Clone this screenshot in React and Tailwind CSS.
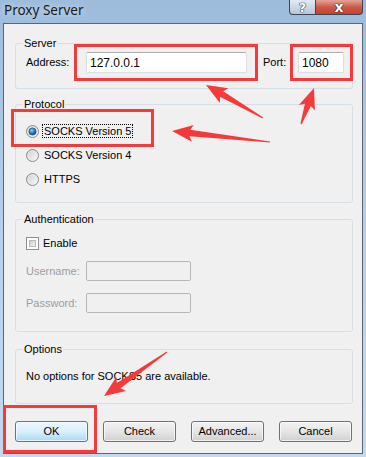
import React from "react";

const arrows = [
  { from: [263, 118], to: [206, 85] },
  { from: [301, 124], to: [314, 88] },
  { from: [270, 142], to: [172, 131] },
  { from: [167, 352], to: [104, 396] },
];

// thin tail that widens into a barbed head, like a markup tool arrow
const arrowPoints = ([x1, y1], [x2, y2]) => {
  const dx = x2 - x1;
  const dy = y2 - y1;
  const len = Math.hypot(dx, dy);
  const ux = dx / len;
  const uy = dy / len;
  const nx = -uy;
  const ny = ux;
  const headLen = 18;
  const headW = 8.5;
  const bodyW = 3.2;
  const tailW = 0.6;
  const bx = x2 - ux * headLen;
  const by = y2 - uy * headLen;
  const pts = [
    [x1 + nx * tailW, y1 + ny * tailW],
    [bx + nx * bodyW, by + ny * bodyW],
    [bx - ux * 3 + nx * headW, by - uy * 3 + ny * headW],
    [x2, y2],
    [bx - ux * 3 - nx * headW, by - uy * 3 - ny * headW],
    [bx - nx * bodyW, by - ny * bodyW],
    [x1 - nx * tailW, y1 - ny * tailW],
  ];
  return pts.map((p) => p.map((v) => v.toFixed(1)).join(",")).join(" ");
};

const Radio = ({ checked }) => (
  <svg width="13" height="13" viewBox="0 0 13 13" className="shrink-0">
    <defs>
      <linearGradient id={checked ? "rbg1" : "rbg0"} x1="0" y1="0" x2="1" y2="1">
        <stop offset="0" stopColor="#cfcfcf" />
        <stop offset="1" stopColor="#fbfbfb" />
      </linearGradient>
      <radialGradient id="rdot" cx="0.4" cy="0.35" r="0.7">
        <stop offset="0" stopColor="#8fd4f7" />
        <stop offset="0.5" stopColor="#2a87c4" />
        <stop offset="1" stopColor="#0d3f6b" />
      </radialGradient>
    </defs>
    <circle cx="6.5" cy="6.5" r="6" fill={`url(#${checked ? "rbg1" : "rbg0"})`} stroke="#8a8a8a" />
    <circle cx="6.5" cy="6.5" r="4.6" fill="none" stroke="#e8e8e8" strokeWidth="0.8" />
    {checked && <circle cx="6.5" cy="6.5" r="3.6" fill="url(#rdot)" stroke="#1b4f7d" strokeWidth="0.7" />}
  </svg>
);

const Group = ({ label, className, children }) => (
  <div className={`relative w-[338px] border border-[#d5dfe5] rounded-[3px] ${className}`}>
    <span className="absolute left-[7px] -top-[8px] px-[1px] bg-[#f0f0f0] leading-[14px]">{label}</span>
    {children}
  </div>
);

const Button = ({ children, primary }) => (
  <div
    className={`w-[73px] h-[21px] rounded-[3px] border flex items-center justify-center shadow-[inset_0_0_0_1px_rgba(255,255,255,0.7)] ${
      primary
        ? "border-[#3c7fb1] bg-gradient-to-b from-[#eaf6fd] via-[#d9f0fc] to-[#a7d9f5]"
        : "border-[#707070] bg-gradient-to-b from-[#f2f2f2] via-[#e6e6e6] to-[#d0d0d0]"
    }`}
  >
    {children}
  </div>
);

const TextBox = ({ value, className }) => (
  <div
    className={`h-[21px] bg-white border border-[#dbdfe6] border-t-[#abadb3] rounded-[2px] flex items-center pl-[3px] text-[12px] ${className}`}
  >
    {value}
  </div>
);

const DisabledBox = () => (
  <div className="w-[105px] h-[20px] border border-[#b3b7ba] rounded-[2px] bg-[#f0f0f0]" />
);

export default function App() {
  return (
    <div className="relative w-[366px] h-[457px] overflow-hidden bg-gradient-to-b from-[#9dbcdb] via-[#b6d0eb] to-[#c3d9f0] font-['Liberation_Sans',Arial,sans-serif] text-[11px] text-black">
      {/* title bar */}
      <div className="h-[23px] flex items-start">
        <span className="ml-[4px] mt-[1px] font-['Noto_Sans',sans-serif] text-[13.5px] leading-[18px] text-[#1a1a1a] [text-shadow:0_0_6px_rgba(255,255,255,0.7)]">
          Proxy Server
        </span>
        <div className="ml-auto mr-[3px] flex">
          <div className="w-[27px] h-[15px] border border-t-0 border-[#3b4656] rounded-bl-[4px] bg-gradient-to-b from-[#e3eaf3] to-[#b7c6d8] flex items-center justify-center text-white font-bold text-[13px] leading-[13px] font-['DejaVu_Sans',sans-serif] [text-shadow:0_0_1px_#333,0_0_1px_#333,0_0_1px_#333]">
            ?
          </div>
          <div className="w-[47px] h-[15px] border border-t-0 border-l-0 border-[#3b4656] rounded-br-[4px] bg-gradient-to-b from-[#e3a497] via-[#cc5a47] to-[#c8402c] flex items-center justify-center text-white font-bold text-[14px] leading-[13px] font-['DejaVu_Sans',sans-serif] [text-shadow:0_0_1px_#222,0_0_1px_#222,0_0_1px_#222]">
            x
          </div>
        </div>
      </div>

      {/* client area */}
      <div className="ml-[3px] w-[360px] h-[431px] border border-[#5b6573] bg-[#f0f0f0] pl-[11px] pt-[19px]">
        <Group label="Server" className="h-[46px]">
          <div className="flex items-center pl-[10px] pt-[8px]">
            <span className="w-[60px]">Address:</span>
            <TextBox value="127.0.0.1" className="w-[161px]" />
            <span className="ml-[16px] w-[35px]">Port:</span>
            <TextBox value="1080" className="w-[46px]" />
          </div>
        </Group>

        <Group label="Protocol" className="mt-[15px] h-[99px]">
          <div className="pl-[10px] pt-[14px]">
            <div className="h-[24px] flex items-center">
              <Radio checked />
              <span className="ml-[3px] px-[1px] border border-dotted border-black leading-[12px]">SOCKS Version 5</span>
            </div>
            <div className="h-[24px] flex items-center">
              <Radio />
              <span className="ml-[5px]">SOCKS Version 4</span>
            </div>
            <div className="h-[24px] flex items-center">
              <Radio />
              <span className="ml-[5px]">HTTPS</span>
            </div>
          </div>
        </Group>

        <Group label="Authentication" className="mt-[16px] h-[113px]">
          <div className="pl-[10px] pt-[17px]">
            <div className="h-[13px] flex items-center">
              <div className="w-[13px] h-[13px] border border-[#8f8f8f] bg-white p-[2px]">
                <div className="w-full h-full bg-gradient-to-br from-[#cbcbcb] to-[#f6f6f6] border border-[#b9b9b9]" />
              </div>
              <span className="ml-[4px]">Enable</span>
            </div>
            <div className="mt-[11px] h-[20px] flex items-center text-[#9d9d9d]">
              <span className="w-[60px]">Username:</span>
              <DisabledBox />
            </div>
            <div className="mt-[12px] h-[20px] flex items-center text-[#9d9d9d]">
              <span className="w-[60px]">Password:</span>
              <DisabledBox />
            </div>
          </div>
        </Group>

        <Group label="Options" className="mt-[17px] h-[55px]">
          <div className="pl-[10px] pt-[19px] leading-[14px]">No options for SOCKS5 are available.</div>
        </Group>

        <div className="mt-[17px] w-[337px] flex justify-between">
          <Button primary>OK</Button>
          <Button>Check</Button>
          <Button>Advanced...</Button>
          <Button>Cancel</Button>
        </div>
      </div>

      {/* markup: red boxes */}
      <div className="absolute left-[74px] top-[44px] w-[184px] h-[37px] border-[3px] border-[#f43a3a]" />
      <div className="absolute left-[290px] top-[44px] w-[63px] h-[37px] border-[3px] border-[#f43a3a]" />
      <div className="absolute left-[11px] top-[109px] w-[143px] h-[38px] border-[3px] border-[#f43a3a]" />
      <div className="absolute left-[3px] top-[405px] w-[94px] h-[48px] border-[3px] border-[#f43a3a]" />

      {/* markup: red arrows */}
      <svg className="absolute inset-0 pointer-events-none" width="366" height="457">
        {arrows.map((a, i) => (
          <polygon key={i} points={arrowPoints(a.from, a.to)} fill="#f43a3a" />
        ))}
      </svg>
    </div>
  );
}
